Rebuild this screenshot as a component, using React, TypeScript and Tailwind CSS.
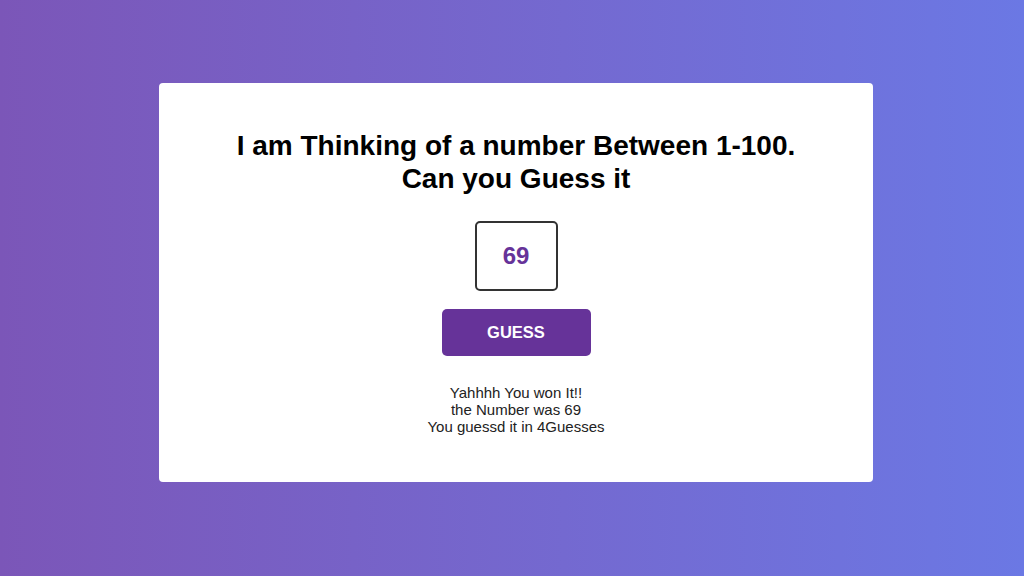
import React from 'react';

const App: React.FC = () => {
  return (
    <div className="w-[1024px] h-[576px] bg-gradient-to-r from-[#7b56b8] to-[#6b78e4] flex justify-center pt-[83px] pl-[8px] font-['Liberation_Sans',Arial,sans-serif]">
      {/* Game card */}
      <div className="w-[714px] h-[399px] bg-white rounded-[4px] flex flex-col items-center pt-[46px]">
        <h1 className="text-[28px] leading-[33px] font-bold text-black text-center">
          I am Thinking of a number Between 1-100.
          <br />
          Can you Guess it
        </h1>
        <div className="mt-[26px] w-[83px] h-[70px] border-2 border-[#333] rounded-[5px] flex items-center justify-center text-[24px] font-bold text-[#663399]">
          69
        </div>
        <button className="mt-[18px] w-[149px] h-[47px] bg-[#663399] rounded-[5px] text-white font-bold text-[16.5px]">
          GUESS
        </button>
        <div className="mt-[28px] text-[15px] leading-[17px] text-[#222] text-center">
          <p>Yahhhh You won It!!</p>
          <p>the Number was 69</p>
          <p>You guessd it in 4Guesses</p>
        </div>
      </div>
    </div>
  );
};

export default App;
